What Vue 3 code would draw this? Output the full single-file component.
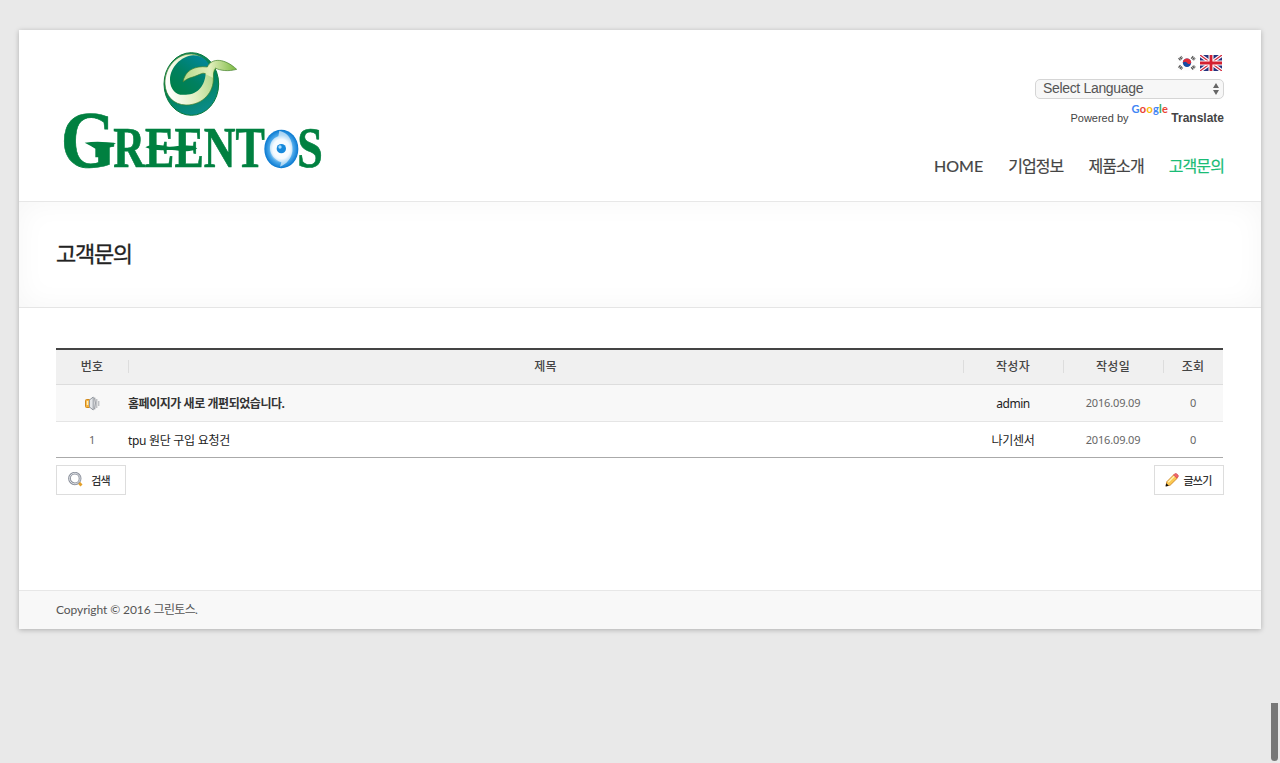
<script setup>
const menu = [
  { label: 'HOME', latin: true },
  { label: '기업정보' },
  { label: '제품소개' },
  { label: '고객문의', active: true },
]
const posts = [
  { notice: true, title: '홈페이지가 새로 개편되었습니다.', author: 'admin', latin: true, date: '2016.09.09', hits: 0 },
  { no: 1, title: 'tpu 원단 구입 요청건', author: '나기센서', date: '2016.09.09', hits: 0 },
]
const google = [
  ['G', '#4285f4'], ['o', '#ea4335'], ['o', '#fbbc05'], ['g', '#4285f4'], ['l', '#34a853'], ['e', '#ea4335'],
]
</script>

<template>
  <div class="shell">
  <div class="page">
    <header class="header">
      <svg class="logo" viewBox="0 0 870 420" width="290" height="140">
        <defs>
          <linearGradient id="orb" x1="0.2" y1="0" x2="0.6" y2="1">
            <stop offset="0" stop-color="#0a8f80" /><stop offset=".45" stop-color="#00804c" /><stop offset="1" stop-color="#0a8c8c" />
          </linearGradient>
          <linearGradient id="core" x1="1" y1="0" x2="0.2" y2="1">
            <stop offset="0" stop-color="#0088a8" /><stop offset=".6" stop-color="#008060" /><stop offset="1" stop-color="#008048" />
          </linearGradient>
          <linearGradient id="swirl" x1="0" y1="0.5" x2="1" y2="0.3">
            <stop offset="0" stop-color="#ffffff" /><stop offset=".5" stop-color="#e0efc0" /><stop offset="1" stop-color="#a4d07c" />
          </linearGradient>
          <linearGradient id="leaf" x1="0" y1="0" x2="1" y2="0">
            <stop offset="0" stop-color="#b5d98a" /><stop offset=".5" stop-color="#e2efbc" /><stop offset="1" stop-color="#7ab840" />
          </linearGradient>
          <radialGradient id="iris">
            <stop offset="0" stop-color="#ffffff" /><stop offset=".5" stop-color="#e4f3ff" /><stop offset=".72" stop-color="#4aa8ea" /><stop offset="1" stop-color="#0878d0" />
          </radialGradient>
        </defs>
        <ellipse cx="424" cy="132" rx="82" ry="94" fill="url(#orb)" stroke="#0b7a3a" stroke-width="3" />
        <path d="M425 42C382 40 343 82 345 132C347 168 370 194 408 195C459 195 492 156 490 113C489 96 494 86 503 82L478 80C468 60 450 43 425 42Z" fill="url(#swirl)" stroke="#3f7d28" stroke-width="2" />
        <path d="M430 46C392 49 361 82 360 119C360 151 383 168 404 164C443 166 466 135 467 99L480 80C472 62 455 46 430 46Z" fill="url(#core)" />
        <path d="M399 126C404 94 431 76 472 81C485 52 525 55 560 88C535 95 511 92 495 84C488 90 489 100 489 113L467 103Q466 96 449 103C428 113 415 112 399 126Z" fill="url(#leaf)" />
        <path d="M467 101Q460 97 449 103C428 113 415 112 399 126C404 94 431 76 472 81C485 52 525 55 560 88C535 95 511 92 495 84" fill="none" stroke="#3f7d28" stroke-width="2" />
        <g class="wordmark">
          <text transform="translate(32 382) scale(.87 1)" font-size="244">G</text>
          <text transform="translate(190 382) scale(.785 1)" font-size="168">REENT</text>
          <text transform="translate(742 382) scale(.82 1)" font-size="168">S</text>
        </g>
        <path d="M104 308Q148 302 198 310L166 326V352H136V326Q124 318 104 308Z" fill="#008040" />
        <path d="M286 322C315 307 335 319 357 320C384 321 410 309 442 325C420 341 388 331 366 330C339 330 315 334 286 322Z" fill="#008040" />
        <ellipse cx="694" cy="327" rx="51" ry="58" fill="url(#iris)" />
        <path d="M688 272C712 278 729 296 727 333C724 356 711 371 690 380L694 367C652 352 649 301 685 289Z" fill="#fff" opacity=".6" />
        <circle cx="694" cy="326" r="14" fill="#1689dc" /><circle cx="690" cy="321" r="5" fill="#a8dcfa" />
      </svg>

      <div class="tools">
        <div class="flags">
          <svg width="20" height="16" viewBox="0 0 20 16">
            <rect width="20" height="16" fill="#fdfdfd" />
            <g stroke="#555" stroke-width="3" stroke-dasharray="1.3 .5">
              <path d="M2 4.7L5.2 2M14.7 2L17.8 4.7M2 11L5.2 13.8M14.7 13.8L17.8 11" />
            </g>
            <circle cx="10" cy="7.8" r="4.2" fill="#174ca4" />
            <path d="M5.8 7.8a4.2 4.2 0 0 1 8.4 0c-1.2 2-3.2 1.4-4.2 0s-3-1.5-4.2 0Z" fill="#e22c38" />
          </svg>
          <svg width="22" height="16" viewBox="0 0 22 16">
            <rect width="22" height="16" fill="#26327d" />
            <path d="M0 0L22 16M22 0L0 16" stroke="#fff" stroke-width="3.6" />
            <path d="M0 0L22 16M22 0L0 16" stroke="#d42c40" stroke-width="1.3" />
            <path d="M11 0V16M0 8H22" stroke="#fff" stroke-width="5" />
            <path d="M11 0V16M0 8H22" stroke="#d42030" stroke-width="2.8" />
          </svg>
        </div>
        <div class="select">
          <span>Select Language</span>
          <svg width="6" height="12" viewBox="0 0 6 12"><path d="M0 5L3 0L6 5ZM0 7L3 12L6 7Z" fill="#666" /></svg>
        </div>
        <div class="powered">
          <span class="by">Powered by</span>
          <span class="google"><span v-for="([c, color], i) in google" :key="i" :style="{ color }">{{ c }}</span></span>
          <b>Translate</b>
        </div>
      </div>

      <nav class="menu">
        <a v-for="m in menu" :key="m.label" :class="{ active: m.active, latin: m.latin }">{{ m.label }}</a>
      </nav>
    </header>

    <section class="banner"><h1>고객문의</h1></section>

    <main class="content">
      <div class="board">
        <div class="row head">
          <span>번호</span><span>제목</span><span>작성자</span><span>작성일</span><span>조회</span>
        </div>
        <div v-for="p in posts" :key="p.title" class="row" :class="{ notice: p.notice }">
          <span class="num">
            <svg v-if="p.notice" width="15" height="15" viewBox="0 0 15 15">
              <path d="M4.5 3.5H1.5Q.5 3.5 .5 4.5V10.5Q.5 11.5 1.5 11.5H4.5Z" fill="#f8b23c" stroke="#d28a1c" />
              <path d="M2.5 5V9" stroke="#fff0bd" stroke-width="1.5" />
              <path d="M4.5 4L8.2 1V14L4.5 11Z" fill="#e5e7ea" stroke="#92979e" />
              <path d="M9.6 1.7Q11.2 7.5 9.6 13.3" fill="none" stroke="#9a9da3" stroke-width="1.3" />
              <path d="M11.8 3V12M13.8 5V10" stroke="#a9abb0" />
            </svg>
            <template v-else>{{ p.no }}</template>
          </span>
          <span class="title">{{ p.title }}</span>
          <span class="author" :class="{ latin: p.latin }">{{ p.author }}</span>
          <span class="num">{{ p.date }}</span>
          <span class="num">{{ p.hits }}</span>
        </div>
      </div>
      <div class="actions">
        <button class="btn search">
          <svg width="15" height="15" viewBox="0 0 15 15">
            <circle cx="6.8" cy="6.5" r="5.3" fill="#fff" stroke="#8d929d" stroke-width="2.8" />
            <circle cx="6.8" cy="6.5" r="5.3" fill="none" stroke="#dcdfe4" stroke-width="1" />
            <path d="M11.2 11L13.5 13.5" stroke="#e4a02a" stroke-width="2.8" />
          </svg>
          <span>검색</span>
        </button>
        <button class="btn write">
          <svg width="14" height="14" viewBox="0 0 14 14">
            <path d="M1 13L1.8 8.7L8.8 1.7L12.3 5.2L5.2 12.2Z" fill="#fbc850" stroke="#c97e24" stroke-width=".8" />
            <path d="M3.2 9.2L9.8 2.8" stroke="#fff2b4" stroke-width="1.3" />
            <path d="M8.5 2L10 .7Q11 0 12.2 1.2L13 2Q13.8 3 13 4L12 5.2Z" fill="#f0686c" stroke="#cf4048" stroke-width=".6" />
            <path d="M.5 13.5L1.3 10.3L3.8 12.7Z" fill="#111" />
          </svg>
          <span>글쓰기</span>
        </button>
      </div>
    </main>

    <footer class="footer">Copyright © 2016 <span>그린토스.</span></footer>
  </div>
  <div class="scroll-thumb"></div>
  </div>
</template>

<style>
body { background: #e9e9e9; }
</style>
<style scoped>
.shell { box-sizing: border-box; height: 763px; padding: 30px 0 0 19px; background: #e9e9e9; }
.page { box-sizing: border-box; width: 1242px; height: 599px; background: #fff; box-shadow: 0 1px 5px rgba(0,0,0,.25); display: flex; flex-direction: column; font-family: "Noto Sans", "Noto Sans CJK KR", sans-serif; color: #444; }
.header { box-sizing: border-box; height: 172px; flex: none; border-bottom: 1px solid #e7e7e7; display: grid; grid-template-columns: 290px 1fr; grid-template-rows: 96px 1fr; padding: 10px 37px 0 31px; }
.logo { grid-row: 1 / 3; display: block; overflow: visible; }
.wordmark { font-family: "Liberation Serif", serif; font-weight: 700; fill: #008040; stroke: #008040; stroke-width: 2; }
.tools { justify-self: end; width: 189px; padding-top: 15px; font-family: "Liberation Sans", sans-serif; }
.flags { display: flex; justify-content: flex-end; gap: 3px; padding-right: 2px; height: 16px; }
.select { box-sizing: border-box; height: 20px; margin-top: 8px; padding: 0 4px 0 7px; border: 1px solid #d5d5d5; border-radius: 5px; background: #f7f7f7; display: flex; align-items: center; justify-content: space-between; font-size: 14px; letter-spacing: -.33px; color: #555; }
.select span { line-height: 17px; padding-bottom: 1px; }
.powered { display: flex; justify-content: flex-end; align-items: flex-start; height: 26px; font-size: 11px; line-height: 16px; margin-top: 2px; }
.powered .by { padding-top: 9px; margin-right: 3px; }
.powered .google { font-size: 11px; font-family: Lato, sans-serif; font-weight: 700; line-height: 15px; margin-right: 3px; letter-spacing: .3px; }
.powered b { padding-top: 9px; font-size: 12px; }
.menu { justify-self: end; display: flex; align-items: center; gap: 25px; height: 58px; font-family: Lato, "Noto Sans CJK KR", sans-serif; font-size: 16px; letter-spacing: -.9px; }
.menu a { -webkit-text-stroke: .2px currentColor; }
.menu .latin { letter-spacing: 0; font-weight: 400; }
.menu .active { color: #1abc76; }
.banner { box-sizing: border-box; height: 106px; flex: none; border-bottom: 1px solid #e5e5e5; padding: 0 37px 5px; display: flex; align-items: center; box-shadow: inset 0 0 30px rgba(0,0,0,.04); }
h1 { margin: 0; font-family: "Noto Sans CJK KR", sans-serif; font-size: 22px; font-weight: 400; line-height: 30px; letter-spacing: -1.3px; color: #222; -webkit-text-stroke: .3px currentColor; }
.content { flex: 1; padding: 40px 37px 0; }
.board { width: 1167px; border-top: 2px solid #444; border-bottom: 1px solid #aaa; }
.row { box-sizing: border-box; height: 35px; display: grid; grid-template-columns: 72px 835px 100px 100px 60px; align-items: center; text-align: center; font-size: 12px; letter-spacing: -.3px; color: #222; line-height: 18px; }
.row .title, .row .author { padding-top: 2px; }
.row.head { height: 35px; background: #f0f0f0; border-bottom: 1px solid #ddd; font-weight: 500; color: #444; padding-bottom: 1px; letter-spacing: .3px; }
.head span + span { background: linear-gradient(#ddd, #ddd) left center / 1px 13px no-repeat; }
.row.notice { height: 37px; background: #f8f8f8; border-bottom: 1px solid #e5e5e5; }
.row .title { text-align: left; }
.notice .title { font-weight: 700; letter-spacing: -.45px; color: #333; }
.row .num { font-size: 11px; color: #666; letter-spacing: -.15px; padding-top: 1px; }
.row.notice .num { padding-top: 0; }
.num svg { display: block; margin: 0 auto; }
.author.latin { letter-spacing: -.5px; }
.actions { display: flex; justify-content: space-between; margin-top: 7px; width: 1168px; }
.btn { box-sizing: border-box; width: 70px; height: 30px; border: 1px solid #ddd; background: #fff; padding: 0; display: flex; align-items: center; justify-content: center; gap: 8px; font: 500 11px/18px "Noto Sans CJK KR", sans-serif; letter-spacing: -.8px; color: #333; }
.btn.search { padding-right: 4px; padding-bottom: 1px; }
.btn.write { gap: 5px; padding-right: 2px; }
.footer { box-sizing: border-box; height: 39px; flex: none; border-top: 1px solid #e7e7e7; background: #f8f8f8; padding: 0 37px; line-height: 37px; font-family: Lato, "Noto Sans CJK KR", sans-serif; font-size: 12px; letter-spacing: -.08px; color: #555; }
.footer span { letter-spacing: -.65px; }
.scroll-thumb { position: fixed; right: 2px; bottom: 2px; width: 7px; height: 58px; background: #777; border-radius: 0 0 4px 4px; }
</style>
